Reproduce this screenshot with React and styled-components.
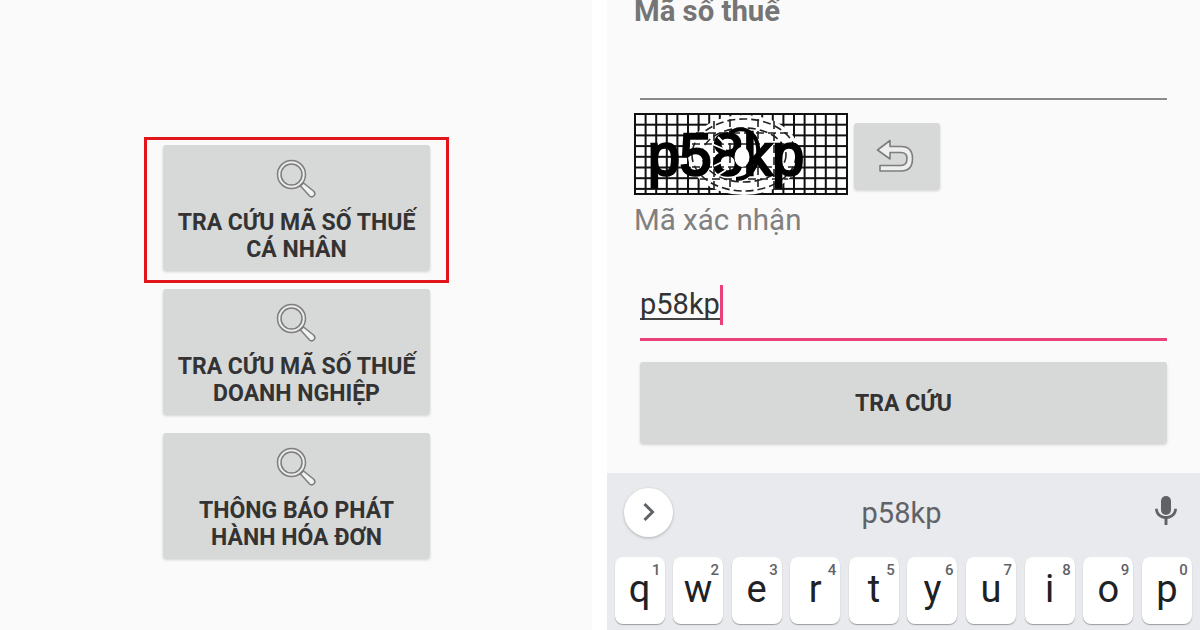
import React from 'react'
import styled, { createGlobalStyle } from 'styled-components'

const GlobalStyle = createGlobalStyle`
  html, body { margin: 0; padding: 0; background: #fff; }
  body { font-family: Roboto, "Noto Sans", sans-serif; }
`

const Page = styled.div`
  width: 1200px;
  height: 630px;
  overflow: hidden;
  display: grid;
  grid-template-columns: 592px 593px;
  column-gap: 15px;
`

const MenuScreen = styled.section`
  background: #fafafa;
  height: 630px;
  padding: 145px 0 0 163px;
  box-sizing: border-box;
  display: flex;
  flex-direction: column;
  gap: 19px;
`

const MenuItem = styled.div`
  position: relative;
  width: 267px;
  height: 125px;
`

const MenuButton = styled.button`
  width: 100%;
  height: 100%;
  border: 0;
  padding: 14px 0 0;
  border-radius: 3px;
  background: #d7d8d8;
  box-shadow: 0 2px 3px rgba(0, 0, 0, 0.16);
  display: flex;
  flex-direction: column;
  align-items: center;
  font: 700 23px/27px Roboto, sans-serif;
  color: #333;
  text-align: center;
`

const MenuLabel = styled.span`
  margin-top: 8px;
`

const Highlight = styled.div`
  position: absolute;
  left: -19px;
  right: -19px;
  top: -8px;
  bottom: -13px;
  border: 3px solid #e2151b;
  box-sizing: border-box;
  pointer-events: none;
`

const FormScreen = styled.section`
  background: #fafafa;
  height: 630px;
  position: relative;
  display: flex;
  flex-direction: column;
  padding-left: 27px;
  box-sizing: border-box;
  overflow: hidden;
`

const TaxLabel = styled.div`
  font: 700 29.3px/32px Roboto, sans-serif;
  color: #757575;
  margin-top: -5px;
`

const Rule = styled.div`
  height: ${p => p.$thick}px;
  background: ${p => p.$color};
  margin-left: 6px;
  margin-right: 33px;
`

const TaxInput = styled.div`
  height: 71px;
`

const CaptchaRow = styled.div`
  display: flex;
  align-items: flex-start;
  gap: 6px;
  margin-top: 13px;
`

const RefreshButton = styled.button`
  width: 86px;
  height: 66px;
  margin-top: 10px;
  border: 0;
  padding: 0 5px 0 0;
  border-radius: 3px;
  background: #d7d8d8;
  box-shadow: 0 2px 3px rgba(0, 0, 0, 0.16);
  display: flex;
  align-items: center;
  justify-content: center;
`

const CodeLabel = styled.div`
  font: 400 29.5px/34px Roboto, sans-serif;
  color: #808080;
  margin-top: 8px;
`

const CodeValue = styled.div`
  display: flex;
  align-items: center;
  height: 40px;
  margin: 48px 0 13px 6px;
  font: 400 29px/34px Roboto, sans-serif;
  color: #333;
`

const Underlined = styled.span`
  border-bottom: 2px solid #444;
  line-height: 28px;
`

const Caret = styled.span`
  width: 3px;
  height: 40px;
  background: #ec407a;
`

const SearchButton = styled.button`
  height: 81px;
  margin: 21px 33px 0 6px;
  padding: 3px 0 0;
  border: 0;
  border-radius: 3px;
  background: #d7d8d8;
  box-shadow: 0 2px 3px rgba(0, 0, 0, 0.16);
  font: 700 23px/28px Roboto, sans-serif;
  color: #333;
`

const Keyboard = styled.div`
  position: absolute;
  left: 0;
  right: 0;
  top: 473px;
  height: 157px;
  background: #e8eaed;
`

const SuggestionStrip = styled.div`
  height: 84px;
  display: grid;
  grid-template-columns: 65px 1fr 66px;
  align-items: center;
  padding-left: 17px;
  box-sizing: border-box;
`

const ExpandButton = styled.div`
  width: 49px;
  height: 49px;
  border-radius: 50%;
  background: #fff;
  box-shadow: 0 1px 3px rgba(0, 0, 0, 0.25);
  display: flex;
  align-items: center;
  justify-content: center;
  margin-top: -6px;
`

const Suggestion = styled.div`
  text-align: center;
  font: 400 29px/34px Roboto, sans-serif;
  color: #5f6368;
  margin: -4px 0 0 -20px;
`

const MicSlot = styled.div`
  display: flex;
  justify-content: center;
  margin: -10px 0 0 -2px;
`

const KeyRow = styled.div`
  display: flex;
  gap: 8.6px;
  padding-left: 7.5px;
`

const Key = styled.div`
  position: relative;
  flex: none;
  width: 50px;
  height: 67px;
  border-radius: 8px;
  background: #fff;
  box-shadow: 0 1px 1px rgba(60, 64, 67, 0.45);
  text-align: center;
  font: 400 38px/65px Roboto, sans-serif;
  color: #202124;
`

const KeyHint = styled.span`
  position: absolute;
  top: 5px;
  right: 4px;
  font: 500 15px/16px Roboto, sans-serif;
  color: #5f6368;
`

const SearchIcon = () => (
  <svg width="42" height="42" viewBox="0 0 42 42" fill="none">
    <circle cx="15.5" cy="15.5" r="14" stroke="#7d7d7d" strokeWidth="1.5" fill="#ececec" />
    <circle cx="15.5" cy="15.5" r="10.5" stroke="#7d7d7d" strokeWidth="1.5" fill="#d7d8d8" />
    <path d="M24.5 27 L27.5 24 L38 32.5 Q39.8 34.6 38 36.8 Q35.8 38.8 33.6 37 Z" stroke="#7d7d7d" strokeWidth="1.5" fill="#f2f2f2" />
  </svg>
)

const BackIcon = () => (
  <svg width="38" height="34" viewBox="0 0 38 34" fill="none">
    <path
      d="M1.5 11 L14 1.5 V7.5 H25 Q36.5 7.5 36.5 19.5 Q36.5 32 25 32 H4 V26.5 H25 Q31 26.5 31 19.5 Q31 13.5 25 13.5 H14 V20 Z"
      stroke="#7d7d7d"
      strokeWidth="1.6"
      strokeLinejoin="round"
      fill="#eeeeee"
    />
  </svg>
)

const Captcha = () => {
  const cols = Array.from({ length: 21 }, (_, i) => i * 10.6)
  const rows = Array.from({ length: 8 }, (_, i) => i * 10.7)
  return (
    <svg width="214" height="82" viewBox="0 0 214 82">
      <rect width="214" height="82" fill="#fff" />
      {cols.map(x => <rect key={x} x={x} y="0" width="2" height="82" fill="#111" />)}
      {rows.map(y => <rect key={y} x="0" y={y} width="214" height="2" fill="#111" />)}
      <rect x="212" width="2" height="82" fill="#111" />
      <rect y="80" width="214" height="2" fill="#111" />
      <ellipse cx="110" cy="42" rx="56" ry="40" fill="#fff" />
      <g stroke="#222" strokeWidth="1.6" fill="none" strokeDasharray="8 4">
        <ellipse cx="110" cy="42" rx="52" ry="36" />
        <ellipse cx="110" cy="42" rx="42" ry="27" />
        <path d="M62 20 H158 M58 31 H162 M58 54 H162 M66 66 H154 M80 8 V76 M96 6 V78 M124 6 V78 M140 8 V76" />
      </g>
      <text
        x="14"
        y="62"
        textLength="156"
        lengthAdjust="spacingAndGlyphs"
        fontFamily="'Liberation Sans', sans-serif"
        fontSize="60"
        fill="#000"
        stroke="#000"
        strokeWidth="2.6"
      >
        p58kp
      </text>
      <path d="M96 20 C108 12 122 18 124 34 C126 52 116 66 102 66" fill="none" stroke="#000" strokeWidth="4" />
      <ellipse cx="108" cy="44" rx="7.5" ry="10" fill="#fff" />
      <path d="M78 31 L92 37 M80 53 L92 47 M84 24 L90 30 M84 62 L92 57" stroke="#fff" strokeWidth="1.8" />
    </svg>
  )
}

const ChevronIcon = () => (
  <svg width="14" height="22" viewBox="0 0 14 22" fill="none">
    <path d="M2.5 3 L10.5 11 L2.5 19" stroke="#5f6368" strokeWidth="3" />
  </svg>
)

const MicIcon = () => (
  <svg width="24" height="31" viewBox="0 0 26 34" fill="#5f6368">
    <rect x="7.5" y="1" width="11" height="21" rx="5.5" />
    <path d="M1 15 H4 C4 20 8 23 13 23 C18 23 22 20 22 15 H25 C25 21 20.5 25.4 14.6 26.2 V33 H11.4 V26.2 C5.5 25.4 1 21 1 15 Z" />
  </svg>
)

const menu = [
  ['TRA CỨU MÃ SỐ THUẾ', 'CÁ NHÂN'],
  ['TRA CỨU MÃ SỐ THUẾ', 'DOANH NGHIỆP'],
  ['THÔNG BÁO PHÁT', 'HÀNH HÓA ĐƠN'],
]

const keys = [
  ['q', '1'], ['w', '2'], ['e', '3'], ['r', '4'], ['t', '5'],
  ['y', '6'], ['u', '7'], ['i', '8'], ['o', '9'], ['p', '0'],
]

export default function App() {
  return (
    <>
      <GlobalStyle />
      <Page>
        <MenuScreen>
          {menu.map(([first, second], i) => (
            <MenuItem key={first + second}>
              <MenuButton>
                <SearchIcon />
                <MenuLabel>{first}<br />{second}</MenuLabel>
              </MenuButton>
              {i === 0 && <Highlight />}
            </MenuItem>
          ))}
        </MenuScreen>
        <FormScreen>
          <TaxLabel>Mã số thuế</TaxLabel>
          <TaxInput />
          <Rule $thick={2} $color="#8a8a8a" />
          <CaptchaRow>
            <Captcha />
            <RefreshButton><BackIcon /></RefreshButton>
          </CaptchaRow>
          <CodeLabel>Mã xác nhận</CodeLabel>
          <CodeValue>
            <Underlined>p58kp</Underlined>
            <Caret />
          </CodeValue>
          <Rule $thick={3} $color="#ec407a" />
          <SearchButton>TRA CỨU</SearchButton>
          <Keyboard>
            <SuggestionStrip>
              <ExpandButton><ChevronIcon /></ExpandButton>
              <Suggestion>p58kp</Suggestion>
              <MicSlot><MicIcon /></MicSlot>
            </SuggestionStrip>
            <KeyRow>
              {keys.map(([letter, hint]) => (
                <Key key={letter}>
                  {letter}
                  <KeyHint>{hint}</KeyHint>
                </Key>
              ))}
            </KeyRow>
          </Keyboard>
        </FormScreen>
      </Page>
    </>
  )
}
